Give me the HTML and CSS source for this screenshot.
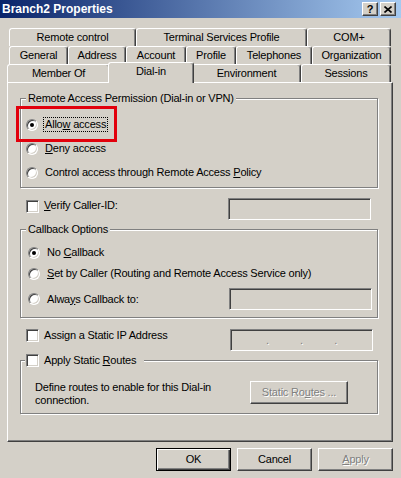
FILE: index.html
```html
<!DOCTYPE html>
<html lang="en">
<head>
    <meta charset="UTF-8">
    <title>Branch2 Properties</title>
    <link rel="stylesheet" href="styles.css">
</head>
<body>
    <div class="dialog">
        <div class="titlebar">
            <span class="title">Branch2 Properties</span>
            <div class="caption-buttons">
                <span class="cap-btn">?</span>
                <span class="cap-btn">
                    <svg width="8" height="7" viewBox="0 0 8 7"><path d="M0.5 0.5 L7.5 6.5 M7.5 0.5 L0.5 6.5" stroke="#000" stroke-width="1.6" fill="none"/></svg>
                </span>
            </div>
        </div>

        <div class="tabs">
            <div class="tab-row row-1">
                <div class="tab">Remote control</div>
                <div class="tab">Terminal Services Profile</div>
                <div class="tab">COM+</div>
            </div>
            <div class="tab-row row-2">
                <div class="tab">General</div>
                <div class="tab">Address</div>
                <div class="tab">Account</div>
                <div class="tab">Profile</div>
                <div class="tab">Telephones</div>
                <div class="tab">Organization</div>
            </div>
            <div class="tab-row row-3">
                <div class="tab">Member Of</div>
                <div class="tab active">Dial-in</div>
                <div class="tab">Environment</div>
                <div class="tab">Sessions</div>
            </div>
        </div>

        <div class="panel">
            <div class="group permission">
                <div class="group-title">Remote Access Permission (Dial-in or VPN)</div>
                <div class="radio-row highlighted">
                    <span class="radio checked"></span>
                    <span class="label focus">Allo<u>w</u> access</span>
                </div>
                <div class="radio-row">
                    <span class="radio"></span>
                    <span class="label"><u>D</u>eny access</span>
                </div>
                <div class="radio-row">
                    <span class="radio"></span>
                    <span class="label">Control access through Remote Access <u>P</u>olicy</span>
                </div>
            </div>

            <div class="field-row verify-row">
                <span class="check"></span>
                <span class="check-label"><u>V</u>erify Caller-ID:</span>
                <span class="textbox verify-box"></span>
            </div>

            <div class="group callback">
                <div class="group-title">Callback Options</div>
                <div class="radio-row first">
                    <span class="radio checked"></span>
                    <span class="label">No <u>C</u>allback</span>
                </div>
                <div class="radio-row second">
                    <span class="radio"></span>
                    <span class="label"><u>S</u>et by Caller (Routing and Remote Access Service only)</span>
                </div>
                <div class="radio-row third">
                    <span class="radio"></span>
                    <span class="label">Alwa<u>y</u>s Callback to:</span>
                    <span class="textbox"></span>
                </div>
            </div>

            <div class="field-row ip-row">
                <span class="check"></span>
                <span class="check-label">Assign a Static IP Address</span>
                <span class="textbox ip-box">
                    <span class="dot">.</span><span class="dot">.</span><span class="dot">.</span>
                </span>
            </div>

            <div class="group routes">
                <div class="group-title check-title">
                    <span class="check"></span>
                    <span class="check-label">Apply Static <u>R</u>outes</span>
                </div>
                <div class="routes-row">
                    <p class="routes-text">Define routes to enable for this Dial-in<br>connection.</p>
                    <span class="btn disabled routes-btn">Static Ro<u>u</u>tes ...</span>
                </div>
            </div>
        </div>

        <div class="buttons">
            <span class="btn default">OK</span>
            <span class="btn">Cancel</span>
            <span class="btn disabled"><u>A</u>pply</span>
        </div>
    </div>
</body>
</html>
```

FILE: styles.css
```css
body {
    margin: 0;
    background: #d4d0c8;
    font-family: "Liberation Sans", Arial, sans-serif;
    font-size: 11px;
    letter-spacing: -0.2px;
    color: #000;
}
.dialog {
    width: 401px;
    height: 478px;
    overflow: hidden;
}

/* title bar */
.titlebar {
    height: 18px;
    display: flex;
    align-items: center;
    justify-content: space-between;
    padding: 0 5px 0 2px;
    background: linear-gradient(to right, #0a246a, #a6caf0);
    color: #fff;
}
.title {
    font-weight: bold;
    font-size: 12px;
    letter-spacing: 0;
}
.caption-buttons {
    display: flex;
    gap: 2px;
}
.cap-btn {
    width: 16px;
    height: 14px;
    box-sizing: border-box;
    display: flex;
    align-items: center;
    justify-content: center;
    background: #d4d0c8;
    border: 1px solid;
    border-color: #fff #404040 #404040 #fff;
    box-shadow: inset -1px -1px 0 #808080;
    color: #000;
    font-weight: bold;
    font-size: 11px;
}

/* tabs */
.tabs {
    margin-top: 10px;
}
.tab-row {
    display: grid;
    height: 18px;
}
.row-1 {
    margin-left: 9px;
    grid-template-columns: 127px 171px 84px;
}
.row-2 {
    margin-left: 9px;
    grid-template-columns: 59px 58px 60px 50px 76px 79px;
}
.row-3 {
    margin-left: 7px;
    grid-template-columns: 103px 82px 109px 90px;
}
.tab {
    background: #d4d0c8;
    border: 1px solid;
    border-bottom: 0;
    border-color: #fff #404040 transparent #fff;
    border-radius: 3px 3px 0 0;
    box-shadow: inset -1px 0 0 #808080;
    text-align: center;
    line-height: 17px;
    white-space: nowrap;
}
.tab.active {
    position: relative;
    z-index: 1;
    margin: -2px -2px -1px;
    line-height: 16px;
}

/* page */
.panel {
    margin-left: 7px;
    width: 386px;
    height: 360px;
    box-sizing: border-box;
    border: 1px solid;
    border-color: #fff #404040 #404040 #fff;
    box-shadow: inset -1px -1px 0 #808080;
    padding: 15px 0 0 12px;
}
.group {
    width: 358px;
    box-sizing: border-box;
    border: 1px solid #808080;
    box-shadow: 1px 1px 0 #fff, inset 1px 1px 0 #fff;
    display: flex;
    flex-direction: column;
}
.group-title {
    align-self: flex-start;
    margin: -7px 0 0 5px;
    padding: 0 2px;
    background: #d4d0c8;
    line-height: 13px;
}
.permission {
    height: 90px;
}
.callback {
    margin-top: 9px;
    height: 89px;
}
.routes {
    margin-top: 9px;
    height: 54px;
}

/* radios and checks */
.radio-row {
    display: flex;
    align-items: center;
    height: 15px;
    margin-left: 5px;
}
.permission .radio-row {
    margin-top: 9px;
}
.permission .radio-row.highlighted {
    margin-top: 12px;
}
.callback .radio-row {
    margin-left: 7px;
}
.callback .first {
    margin-top: 9px;
}
.callback .second {
    margin-top: 6px;
}
.callback .third {
    margin-top: 7px;
    height: 22px;
}
.radio {
    flex: none;
    width: 12px;
    height: 12px;
    box-sizing: border-box;
    border-radius: 50%;
    border: 1px solid;
    border-color: #808080 #fff #fff #808080;
    box-shadow: inset 1px 1px 0 #404040, inset -1px -1px 0 #d4d0c8;
    background: #fff;
    display: flex;
    align-items: center;
    justify-content: center;
}
.radio.checked::after {
    content: '';
    width: 4px;
    height: 4px;
    border-radius: 50%;
    background: #000;
}
.label {
    margin-left: 5px;
    padding: 0 1px;
    border: 1px dotted transparent;
    line-height: 13px;
    white-space: nowrap;
}
.label.focus {
    border-color: #000;
}
.highlighted {
    position: relative;
}
.highlighted::after {
    content: '';
    position: absolute;
    left: -10px;
    top: -11px;
    width: 101px;
    height: 36px;
    box-sizing: border-box;
    border: 3px solid #e2000c;
}

.check {
    flex: none;
    width: 13px;
    height: 13px;
    box-sizing: border-box;
    border: 1px solid;
    border-color: #808080 #fff #fff #808080;
    box-shadow: inset 1px 1px 0 #404040, inset -1px -1px 0 #d4d0c8;
    background: #fff;
}
.check-label {
    margin-left: 5px;
    line-height: 13px;
    white-space: nowrap;
}
.field-row {
    display: flex;
    align-items: flex-start;
    height: 22px;
    padding-left: 6px;
}
.verify-row {
    margin-top: 10px;
}
.verify-row .check {
    margin-top: 2px;
}
.verify-row .check-label {
    margin-top: 1px;
}
.ip-row {
    margin-top: 11px;
}

.textbox {
    flex: none;
    width: 143px;
    height: 22px;
    box-sizing: border-box;
    margin-left: auto;
    margin-right: 5px;
    border: 1px solid;
    border-color: #808080 #fff #fff #808080;
    box-shadow: inset 1px 1px 0 #404040, inset -1px -1px 0 #d4d0c8;
    background: #d4d0c8;
}
.verify-box {
    margin-right: 21px;
}
.ip-box {
    margin-right: 19px;
    display: flex;
    justify-content: space-between;
    align-items: center;
    padding: 0 35px;
}
.dot {
    color: #808080;
    text-shadow: 1px 1px 0 #fff;
    line-height: 13px;
}

/* buttons */
.btn {
    flex: none;
    width: 75px;
    height: 23px;
    box-sizing: border-box;
    text-align: center;
    line-height: 21px;
    white-space: nowrap;
    background: #d4d0c8;
    border: 1px solid;
    border-color: #fff #404040 #404040 #fff;
    box-shadow: inset -1px -1px 0 #808080;
}
.btn.default {
    border-color: #000;
    box-shadow: inset 1px 1px 0 #fff, inset -1px -1px 0 #404040, inset -2px -2px 0 #808080;
}
.btn.disabled {
    color: #808080;
    text-shadow: 1px 1px 0 #fff;
}
.buttons {
    display: flex;
    justify-content: flex-end;
    gap: 6px;
    margin-top: 6px;
    padding-right: 8px;
}

/* static routes */
.check-title {
    display: flex;
    align-items: center;
    margin-left: 4px;
    padding: 0 8px 0 1px;
}
.routes-row {
    display: flex;
    align-items: flex-start;
    margin-top: 14px;
}
.routes-text {
    margin: 0 0 0 14px;
    line-height: 13px;
}
.routes-row .routes-btn {
    margin-left: auto;
    margin-right: 29px;
    width: 98px;
}
```
